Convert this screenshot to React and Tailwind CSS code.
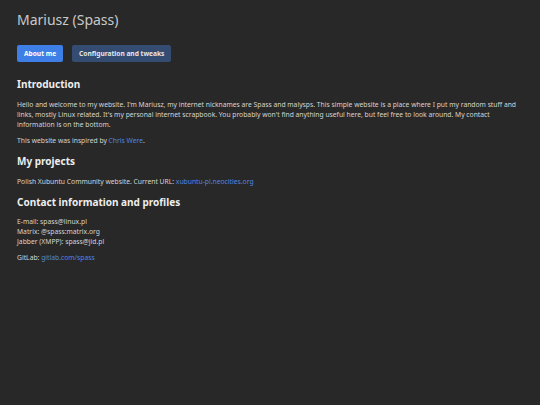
export default function App() {
  const link = 'text-[#4f86e0]'
  const body = 'text-[6.75px] leading-[10px]'
  const head = 'text-[10px] font-bold leading-[14px] text-[#eeeeee]'
  return (
    <div className="min-h-[405px] bg-[#282828] px-[17px] pt-[10px] text-[#d4d4d4] [font-family:'Noto_Sans',sans-serif]">
      <h1 className="text-[14px] leading-[20px] text-[#c8c8c8]">Mariusz (Spass)</h1>

      <nav className="mt-[15px] flex gap-[9px]">
        <button className="h-[17px] rounded-[2px] bg-[#3d7fe6] px-[7px] text-[6.6px] font-bold text-white">About me</button>
        <button className="h-[17px] rounded-[2px] bg-[#344b72] px-[7px] text-[6.6px] font-bold text-[#e6e6e6]">Configuration and tweaks</button>
      </nav>

      <h2 className={`mt-[15px] ${head}`}>Introduction</h2>
      <p className={`mt-[9px] ${body}`}>
        Hello and welcome to my website. I'm Mariusz, my internet nicknames are Spass and malysps. This simple website is a place where I put my random stuff and links, mostly Linux related. It's my personal internet scrapbook. You probably won't find anything useful here, but feel free to look around. My contact information is on the bottom.
      </p>
      <p className={`mt-[6px] ${body}`}>
        This website was inspired by <span className={link}>Chris Were</span>.
      </p>

      <h2 className={`mt-[8px] ${head}`}>My projects</h2>
      <p className={`mt-[9px] ${body}`}>
        Polish Xubuntu Community website. Current URL: <span className={link}>xubuntu-pl.neocities.org</span>
      </p>

      <h2 className={`mt-[8px] ${head}`}>Contact information and profiles</h2>
      <p className={`mt-[8px] leading-[9.5px] ${body}`}>
        E-mail: spass@linux.pl
        <br />
        Matrix: @spass:matrix.org
        <br />
        Jabber (XMPP): spass@jid.pl
      </p>
      <p className={`mt-[6px] ${body}`}>
        GitLab: <span className={link}>gitlab.com/spass</span>
      </p>
    </div>
  )
}
